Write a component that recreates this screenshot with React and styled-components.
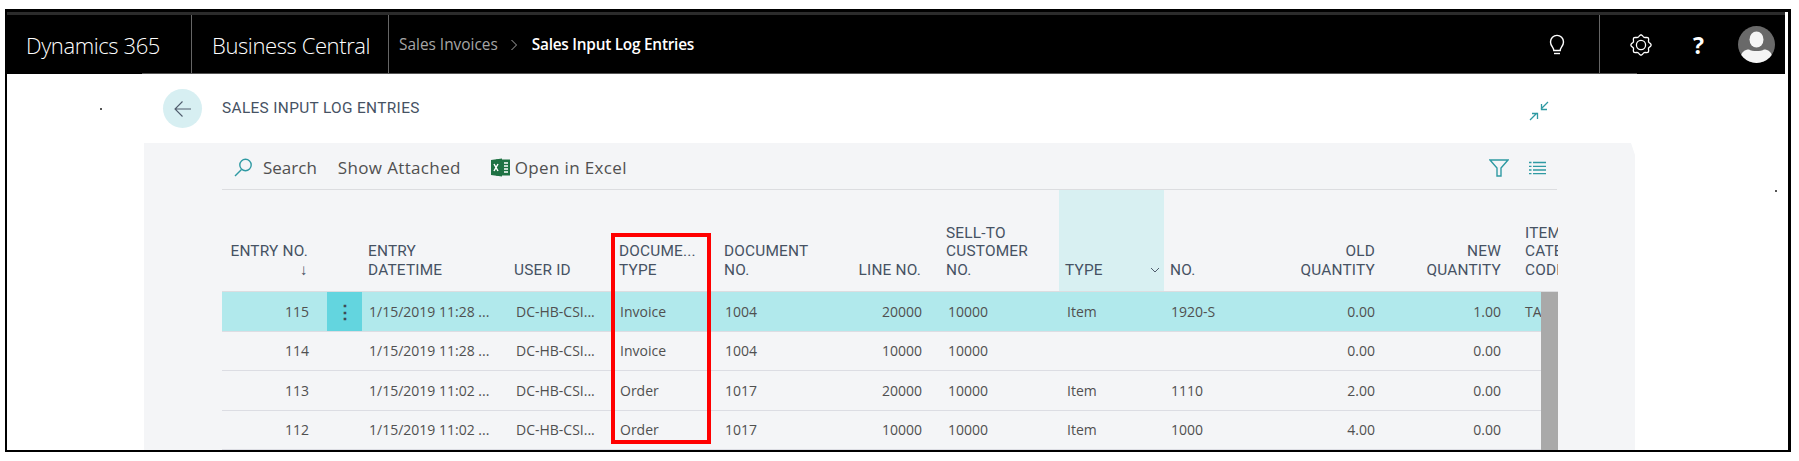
import React from 'react';
import styled, { createGlobalStyle } from 'styled-components';

const GlobalStyle = createGlobalStyle`
  html, body { margin: 0; padding: 0; background: #fff; }
  body { font-family: "Open Sans", "Liberation Sans", sans-serif; overflow: hidden; }
`;

const COLUMNS = '105px 35px 149px 103px 106px 99px 107px 133px 105px 82px 132px 126px 54px';

const Frame = styled.div`
  position: relative;
  box-sizing: border-box;
  width: 1786px;
  height: 443px;
  margin: 9px 0 0 5px;
  border: solid #000;
  border-width: 3px 3px 2px 2px;
  overflow: hidden;
`;

const Speck = styled.i`
  position: absolute;
  left: ${p => p.$x}px;
  top: ${p => p.$y}px;
  width: 2px;
  height: 2px;
  background: #555;
`;

const TopBar = styled.header`
  position: relative;
  display: flex;
  align-items: center;
  height: 62px;
  margin-right: 3px;
  background: #000;
  border-top: 3px solid #2b2b2b;
  box-sizing: border-box;
  color: #fff;
  &::after {
    content: '';
    position: absolute;
    left: 135px;
    right: 148px;
    bottom: 0;
    height: 1px;
    background: #555;
  }
`;

const Brand = styled.div`
  display: flex;
  align-items: center;
  box-sizing: border-box;
  height: 100%;
  width: ${p => p.$width}px;
  padding-left: ${p => p.$pad}px;
  border-right: 1px solid #666;
  font-size: 22px;
  font-weight: 300;
  letter-spacing: -0.4px;
`;

const Crumbs = styled.nav`
  display: flex;
  align-items: center;
  padding-left: 10px;
  font-size: 15.4px;
  flex: 1;
`;

const Crumb = styled.span`
  color: ${p => (p.$current ? '#fff' : '#a6a6a6')};
  font-weight: ${p => (p.$current ? 600 : 400)};
  letter-spacing: ${p => (p.$current ? '-0.25px' : '0')};
`;

const CrumbSep = styled.svg`
  width: 8px;
  height: 12px;
  margin: 0 14px 0 12px;
  fill: none;
  stroke: #a6a6a6;
`;

const BarIcons = styled.div`
  display: flex;
  align-items: center;
  height: 100%;
`;

const BulbSlot = styled.div`
  display: flex;
  justify-content: center;
  align-items: center;
  width: 84px;
  height: 100%;
  border-right: 1px solid #666;
`;

const IconSlot = styled.div`
  display: flex;
  justify-content: center;
  align-items: center;
  box-sizing: border-box;
  width: ${p => p.$width}px;
  height: 100%;
  padding-left: ${p => p.$pad || 0}px;
`;

const Question = styled.span`
  font-family: "Open Sans", sans-serif;
  font-weight: 700;
  font-size: 23px;
  color: #fff;
`;

const Content = styled.main`
  padding-left: 137px;
  width: 1491px;
`;

const TitleRow = styled.div`
  display: flex;
  align-items: center;
  height: 69px;
  padding-left: 19px;
  padding-right: 86px;
  width: 1491px;
  box-sizing: border-box;
`;

const BackButton = styled.div`
  display: flex;
  align-items: center;
  justify-content: center;
  flex: none;
  width: 39px;
  height: 39px;
  border-radius: 50%;
  background: #d7eff2;
`;

const PageTitle = styled.h1`
  flex: 1;
  margin: -2px 0 0 20px;
  font-family: Roboto, sans-serif;
  font-size: 15.4px;
  font-weight: 400;
  letter-spacing: 0.35px;
  color: #465263;
`;

const CompressIcon = styled.svg`
  margin-top: 5px;
  fill: none;
  stroke: #2f9aa3;
  stroke-width: 1.3;
`;

const Panel = styled.section`
  height: 320px;
  padding-left: 78px;
  background: #f4f5f7;
  clip-path: polygon(0 0, 1487px 0, 100% 12px, 100% 100%, 0 100%);
`;

const Toolbar = styled.div`
  display: flex;
  align-items: center;
  box-sizing: border-box;
  width: 1335px;
  height: 47px;
  padding: 3px 0 0 12px;
  border-bottom: 1px solid #dcdde0;
  color: #505050;
  font-size: 17px;
`;

const Action = styled.span`
  display: flex;
  align-items: center;
  gap: ${p => p.$gap || 6}px;
  margin-right: ${p => p.$right || 0}px;
  letter-spacing: ${p => p.$spacing || 0}px;
`;

const ToolbarEnd = styled.div`
  display: flex;
  align-items: center;
  gap: 20px;
  margin-left: auto;
  padding-right: 11px;
`;

const Table = styled.div`
  position: relative;
  width: 1336px;
  overflow: hidden;
`;

const HeadRow = styled.div`
  display: grid;
  grid-template-columns: ${COLUMNS};
  height: 102px;
  border-bottom: 1px solid #dcdde0;
  box-sizing: border-box;
`;

const HeadCell = styled.div`
  display: flex;
  flex-direction: column;
  justify-content: flex-end;
  box-sizing: border-box;
  padding: 0 ${p => p.$padRight || 0}px 12px ${p => p.$padLeft || 0}px;
  text-align: ${p => (p.$right ? 'right' : 'left')};
  font-family: Roboto, sans-serif;
  font-size: 15.4px;
  font-weight: 400;
  letter-spacing: 0.2px;
  line-height: 18.5px;
  color: #465263;
  white-space: nowrap;
  overflow: hidden;
  background: ${p => (p.$active ? '#d8f0f2' : 'transparent')};
`;

const TypeHead = styled.div`
  display: flex;
  align-items: center;
  justify-content: space-between;
  padding-right: 4px;
`;

const Row = styled.div`
  display: grid;
  grid-template-columns: ${COLUMNS};
  height: 39.5px;
  box-sizing: border-box;
  align-items: stretch;
  border-bottom: 1px solid #dcdde3;
  background: ${p => (p.$selected ? '#b1e9ec' : 'transparent')};
`;

const Cell = styled.div`
  display: flex;
  align-items: center;
  justify-content: ${p => (p.$right ? 'flex-end' : 'flex-start')};
  box-sizing: border-box;
  padding: 0 ${p => p.$padRight || 0}px 0 ${p => p.$padLeft || 0}px;
  font-size: 14px;
  color: #505050;
  white-space: nowrap;
  overflow: hidden;
`;

const DotsCell = styled.div`
  display: flex;
  align-items: center;
  justify-content: center;
  background: ${p => (p.$show ? '#63d5df' : 'transparent')};
  color: #3d4a55;
  font-size: 18px;
  font-weight: 700;
`;

const Scrollbar = styled.div`
  position: absolute;
  top: 102px;
  bottom: 0;
  right: 0;
  width: 17px;
  background: #a9a9a9;
`;

const RedBox = styled.div`
  position: absolute;
  left: 604px;
  top: 221px;
  width: 100px;
  height: 211px;
  box-sizing: border-box;
  border: 4px solid #ff0000;
`;

const teal = '#2f9aa3';

const gearPath = (() => {
  let d = '';
  for (let i = 0; i < 48; i++) {
    const a = (i / 48) * Math.PI * 2;
    const r = 10 + 1.1 * Math.cos(a * 8);
    d += `${i ? 'L' : 'M'}${(12 + r * Math.cos(a)).toFixed(2)} ${(12 + r * Math.sin(a)).toFixed(2)}`;
  }
  return d + 'Z';
})();

const rows = [
  ['115', '1/15/2019 11:28 ...', 'Invoice', '1004', '20000', 'Item', '1920-S', '0.00', '1.00', 'TA'],
  ['114', '1/15/2019 11:28 ...', 'Invoice', '1004', '10000', '', '', '0.00', '0.00', ''],
  ['113', '1/15/2019 11:02 ...', 'Order', '1017', '20000', 'Item', '1110', '2.00', '0.00', ''],
  ['112', '1/15/2019 11:02 ...', 'Order', '1017', '10000', 'Item', '1000', '4.00', '0.00', ''],
];

const Lines = ({ children }) =>
  children.map(line => <div key={line}>{line}</div>);

export default function App() {
  return (
    <>
      <GlobalStyle />
      <Frame>
        <TopBar>
          <Brand $width={185} $pad={19}>Dynamics 365</Brand>
          <Brand $width={197} $pad={20}>Business Central</Brand>
          <Crumbs>
            <Crumb>Sales Invoices</Crumb>
            <CrumbSep viewBox="0 0 8 12"><path d="M1.5 1l5 5-5 5" /></CrumbSep>
            <Crumb $current>Sales Input Log Entries</Crumb>
          </Crumbs>
          <BarIcons>
            <BulbSlot>
              <svg width="20" height="24" viewBox="0 0 20 24" fill="none" stroke="#fff" strokeWidth="1.4">
                <path d="M6.8 17.5c0-3-3.3-4.5-3.3-8.6a6.5 6.5 0 0 1 13 0c0 4.100-3.300 5.600-3.300 8.600z" />
                <path d="M7 20.500h6" />
              </svg>
            </BulbSlot>
            <IconSlot $width={82}>
              <svg width="22" height="22" viewBox="0 0 24 24" fill="none" stroke="#fff" strokeWidth="1.4">
                <path d={gearPath} />
                <circle cx="12" cy="12" r="5" />
              </svg>
            </IconSlot>
            <IconSlot $width={33}><Question>?</Question></IconSlot>
            <IconSlot $width={70} $pad={12}>
              <svg width="37" height="37" viewBox="0 0 37 37">
                <defs>
                  <clipPath id="avatar-clip"><circle cx="18.500" cy="18.500" r="18.500" /></clipPath>
                </defs>
                <g clipPath="url(#avatar-clip)">
                  <rect width="37" height="37" fill="#696969" />
                  <ellipse cx="18.500" cy="13.500" rx="7" ry="8" fill="#f5f5f5" />
                  <path d="M3 37v-6c0-5 4-7.500 8-7.500 3 2 12 2 15 0 4 0 8 2.500 8 7.500v6z" fill="#f5f5f5" />
                </g>
              </svg>
            </IconSlot>
          </BarIcons>
        </TopBar>
        <Content>
          <TitleRow>
            <BackButton>
              <svg width="20" height="20" viewBox="0 0 20 20" fill="none" stroke="#505c6d" strokeWidth="1.1">
                <path d="M18 10H2M9.500 2.500L2 10l7.500 7.500" />
              </svg>
            </BackButton>
            <PageTitle>SALES INPUT LOG ENTRIES</PageTitle>
            <CompressIcon width="20" height="20" viewBox="0 0 20 20">
              <path d="M19 1l-7 7M12.500 3v5.500H18M1 19l7-7M3 12.500h5.500V18" />
            </CompressIcon>
          </TitleRow>
          <Panel>
            <Toolbar>
              <Action $right={21} $gap={10}>
                <svg width="19" height="19" viewBox="0 0 19 19" fill="none" stroke={teal} strokeWidth="1.4">
                  <circle cx="11.500" cy="7" r="5.700" />
                  <path d="M7.500 11.500L1 18" />
                </svg>
                Search
              </Action>
              <Action $right={30} $spacing={0.35}>Show Attached</Action>
              <Action $gap={5} $spacing={0.35}>
                <svg width="19" height="19" viewBox="0 0 19 19">
                  <rect x="5" y="1.500" width="14" height="16" fill="#1f7244" />
                  <path d="M13 5h4M13 8h4M13 11h4M13 14h4" stroke="#fff" strokeWidth="1.500" />
                  <path d="M0 2L11 .5v18L0 17z" fill="#1f7244" />
                  <path d="M3 6l4 7M7 6l-4 7" stroke="#fff" strokeWidth="1.500" />
                </svg>
                Open in Excel
              </Action>
              <ToolbarEnd>
                <svg width="20" height="18" viewBox="0 0 20 18" fill="none" stroke={teal} strokeWidth="1.400">
                  <path d="M1 1h18l-7 8v8H8V9z" />
                </svg>
                <svg width="17" height="14" viewBox="0 0 17 14" fill="none" stroke={teal} strokeWidth="1.300">
                  <path d="M0 1.500h2.500M4 1.500h13M0 5.300h2.500M4 5.300h13M0 9h2.500M4 9h13M0 12.700h2.500M4 12.700h13" />
                </svg>
              </ToolbarEnd>
            </Toolbar>
            <Table>
              <HeadRow>
                <HeadCell $right $padRight={19}>
                  <div>ENTRY NO.</div>
                  <div>↓</div>
                </HeadCell>
                <HeadCell />
                <HeadCell $padLeft={6}><Lines>{['ENTRY', 'DATETIME']}</Lines></HeadCell>
                <HeadCell $padLeft={3}>USER ID</HeadCell>
                <HeadCell $padLeft={5}><Lines>{['DOCUME...', 'TYPE']}</Lines></HeadCell>
                <HeadCell $padLeft={4}><Lines>{['DOCUMENT', 'NO.']}</Lines></HeadCell>
                <HeadCell $right $padRight={5}>LINE NO.</HeadCell>
                <HeadCell $padLeft={20}><Lines>{['SELL-TO', 'CUSTOMER', 'NO.']}</Lines></HeadCell>
                <HeadCell $active $padLeft={6}>
                  <TypeHead>
                    TYPE
                    <svg width="10" height="6" viewBox="0 0 10 6" fill="none" stroke="#505c6d">
                      <path d="M1 1l4 4 4-4" />
                    </svg>
                  </TypeHead>
                </HeadCell>
                <HeadCell $padLeft={6}>NO.</HeadCell>
                <HeadCell $right $padRight={3}><Lines>{['OLD', 'QUANTITY']}</Lines></HeadCell>
                <HeadCell $right $padRight={3}><Lines>{['NEW', 'QUANTITY']}</Lines></HeadCell>
                <HeadCell $padLeft={21}><Lines>{['ITEM', 'CATEGORY', 'CODE']}</Lines></HeadCell>
              </HeadRow>
              {rows.map((r, i) => (
                <Row key={r[0]} $selected={i === 0}>
                  <Cell $right $padRight={18}>{r[0]}</Cell>
                  <DotsCell $show={i === 0}>{i === 0 ? '⋮' : ''}</DotsCell>
                  <Cell $padLeft={7}>{r[1]}</Cell>
                  <Cell $padLeft={5}>DC-HB-CSI...</Cell>
                  <Cell $padLeft={6}>{r[2]}</Cell>
                  <Cell $padLeft={5}>{r[3]}</Cell>
                  <Cell $right $padRight={4}>{r[4]}</Cell>
                  <Cell $padLeft={22}>10000</Cell>
                  <Cell $padLeft={8}>{r[5]}</Cell>
                  <Cell $padLeft={7}>{r[6]}</Cell>
                  <Cell $right $padRight={3}>{r[7]}</Cell>
                  <Cell $right $padRight={3}>{r[8]}</Cell>
                  <Cell $padLeft={21}>{r[9]}</Cell>
                </Row>
              ))}
              <Scrollbar />
            </Table>
          </Panel>
        </Content>
        <RedBox />
        <Speck $x={93} $y={96} />
        <Speck $x={1768} $y={178} />
      </Frame>
    </>
  );
}
